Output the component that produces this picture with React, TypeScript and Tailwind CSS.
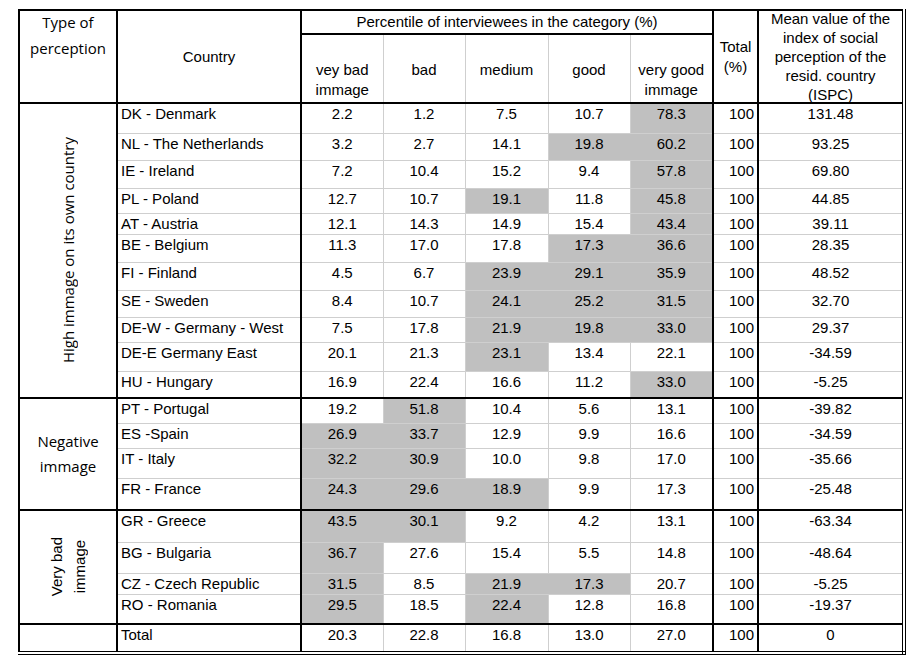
import React from "react";

type Row = { c: string; v: string[]; s: number[]; t: string; m: string; h: number };

const high: Row[] = [
  { c: "DK - Denmark", v: ["2.2", "1.2", "7.5", "10.7", "78.3"], s: [4], t: "100", m: "131.48", h: 30 },
  { c: "NL - The Netherlands", v: ["3.2", "2.7", "14.1", "19.8", "60.2"], s: [3, 4], t: "100", m: "93.25", h: 27 },
  { c: "IE - Ireland", v: ["7.2", "10.4", "15.2", "9.4", "57.8"], s: [4], t: "100", m: "69.80", h: 28 },
  { c: "PL - Poland", v: ["12.7", "10.7", "19.1", "11.8", "45.8"], s: [2, 4], t: "100", m: "44.85", h: 25 },
  { c: "AT - Austria", v: ["12.1", "14.3", "14.9", "15.4", "43.4"], s: [4], t: "100", m: "39.11", h: 21 },
  { c: "BE - Belgium", v: ["11.3", "17.0", "17.8", "17.3", "36.6"], s: [3, 4], t: "100", m: "28.35", h: 28 },
  { c: "FI - Finland", v: ["4.5", "6.7", "23.9", "29.1", "35.9"], s: [2, 3, 4], t: "100", m: "48.52", h: 28 },
  { c: "SE - Sweden", v: ["8.4", "10.7", "24.1", "25.2", "31.5"], s: [2, 3, 4], t: "100", m: "32.70", h: 27 },
  { c: "DE-W - Germany - West", v: ["7.5", "17.8", "21.9", "19.8", "33.0"], s: [2, 3, 4], t: "100", m: "29.37", h: 25 },
  { c: "DE-E Germany East", v: ["20.1", "21.3", "23.1", "13.4", "22.1"], s: [2], t: "100", m: "-34.59", h: 29 },
  { c: "HU - Hungary", v: ["16.9", "22.4", "16.6", "11.2", "33.0"], s: [4], t: "100", m: "-5.25", h: 27 },
];

const negative: Row[] = [
  { c: "PT - Portugal", v: ["19.2", "51.8", "10.4", "5.6", "13.1"], s: [1], t: "100", m: "-39.82", h: 25 },
  { c: "ES -Spain", v: ["26.9", "33.7", "12.9", "9.9", "16.6"], s: [0, 1], t: "100", m: "-34.59", h: 25 },
  { c: "IT - Italy", v: ["32.2", "30.9", "10.0", "9.8", "17.0"], s: [0, 1], t: "100", m: "-35.66", h: 30 },
  { c: "FR - France", v: ["24.3", "29.6", "18.9", "9.9", "17.3"], s: [0, 1, 2], t: "100", m: "-25.48", h: 32 },
];

const veryBad: Row[] = [
  { c: "GR - Greece", v: ["43.5", "30.1", "9.2", "4.2", "13.1"], s: [0, 1], t: "100", m: "-63.34", h: 32 },
  { c: "BG - Bulgaria", v: ["36.7", "27.6", "15.4", "5.5", "14.8"], s: [0], t: "100", m: "-48.64", h: 31 },
  { c: "CZ - Czech Republic", v: ["31.5", "8.5", "21.9", "17.3", "20.7"], s: [0, 2, 3], t: "100", m: "-5.25", h: 21 },
  { c: "RO - Romania", v: ["29.5", "18.5", "22.4", "12.8", "16.8"], s: [0, 2], t: "100", m: "-19.37", h: 30 },
];

const totalRow: Row = { c: "Total", v: ["20.3", "22.8", "16.8", "13.0", "27.0"], s: [], t: "100", m: "0", h: 29 };

const calibri = { fontFamily: "'Open Sans', 'Noto Sans', sans-serif" };

function DataCells({ r, bottom }: { r: Row; bottom: string }) {
  return (
    <>
      <td className={`border-l-2 border-r-2 border-black ${bottom} pl-[3px] align-top leading-5 whitespace-nowrap`}>{r.c}</td>
      {r.v.map((v, i) => {
        const shaded = r.s.includes(i);
        const right = i === 4 ? "border-r-2 border-r-black" : shaded && r.s.includes(i + 1) ? "border-r border-r-[#c0c0c0]" : "border-r border-r-[#cfcfcf]";
        return (
          <td
            key={i}
            className={`${right} ${bottom} ${shaded ? "bg-[#c0c0c0]" : ""} text-center align-top leading-5`}
          >
            {v}
          </td>
        );
      })}
      <td className={`border-r-2 border-r-black ${bottom} pr-[3px] text-right align-top leading-5`}>{r.t}</td>
      <td className={`border-r-4 border-r-black [border-right-style:double] ${bottom} text-center align-top leading-5`}>{r.m}</td>
    </>
  );
}

function Group({ rows, label }: { rows: Row[]; label: React.ReactNode }) {
  return (
    <>
      {rows.map((r, i) => {
        const last = i === rows.length - 1;
        const bottom = last ? "border-b-2 border-b-black" : "border-b border-b-[#cfcfcf]";
        return (
          <tr key={r.c} style={{ height: r.h }}>
            {i === 0 && (
              <td rowSpan={rows.length} className="border-l-2 border-r-2 border-b-2 border-black p-0 text-center align-middle">
                {label}
              </td>
            )}
            <DataCells r={r} bottom={bottom} />
          </tr>
        );
      })}
    </>
  );
}

export default function App() {
  return (
    <div className="w-[922px] h-[668px] bg-white overflow-hidden pt-[9px] pl-[18px]">
      <table
        className="table-fixed border-collapse w-[885px] text-[15px] text-black"
        style={{ fontFamily: "'Liberation Sans', Arial, sans-serif" }}
      >
        <colgroup>
          <col className="w-[98px]" />
          <col className="w-[184px]" />
          <col className="w-[82px]" />
          <col className="w-[82px]" />
          <col className="w-[83px]" />
          <col className="w-[82px]" />
          <col className="w-[83px]" />
          <col className="w-[45px]" />
          <col className="w-[146px]" />
        </colgroup>
        <thead>
          <tr className="h-[24px]">
            <td rowSpan={2} className="border-2 border-black text-center align-top p-0" style={calibri}>
              <div className="h-[88px] overflow-visible text-[15px] leading-[26px] -mt-[2px]">
                Type of
                <br />
                perception
              </div>
            </td>
            <td rowSpan={2} className="border-2 border-black text-center align-middle leading-5 p-0">
              Country
            </td>
            <td colSpan={5} className="border-t-2 border-b-2 border-r-2 border-black text-center align-middle leading-5 p-0">
              Percentile of interviewees in the category (%)
            </td>
            <td rowSpan={2} className="border-2 border-black text-center align-middle leading-5 p-0">
              Total
              <br />
              (%)
            </td>
            <td rowSpan={2} className="border-t-2 border-b-2 border-l-2 border-r-4 border-black [border-right-style:double] text-center align-middle p-0">
              <div className="h-[86px] flex flex-col justify-center leading-[19px]">
                <div>Mean value of the</div>
                <div>index of social</div>
                <div>perception of the</div>
                <div>resid. country</div>
                <div>(ISPC)</div>
              </div>
            </td>
          </tr>
          <tr className="h-[69px]">
            {["vey bad|immage", "bad", "medium", "good", "very good|immage"].map((h, i) => (
              <td
                key={h}
                className={`${i === 4 ? "border-r-2 border-r-black" : "border-r border-r-[#cfcfcf]"} border-b-2 border-b-black text-center align-top p-0`}
              >
                <div className="h-[64px] pt-[25px] leading-5 overflow-visible">
                  {h.split("|").map((p, j) => (
                    <div key={j}>{p}</div>
                  ))}
                </div>
              </td>
            ))}
          </tr>
        </thead>
        <tbody>
          <Group
            rows={high}
            label={
              <div className="flex justify-center items-center">
                <span className="[writing-mode:vertical-rl] rotate-180 text-[15px] leading-5 whitespace-nowrap" style={calibri}>
                  High immage on its own country
                </span>
              </div>
            }
          />
          <Group
            rows={negative}
            label={
              <div className="text-[15px] leading-[25px]" style={calibri}>
                Negative
                <br />
                immage
              </div>
            }
          />
          <Group
            rows={veryBad}
            label={
              <div className="flex justify-center items-center">
                <span className="[writing-mode:vertical-rl] rotate-180 text-center leading-[23px] whitespace-nowrap">
                  Very bad
                  <br />
                  immage
                </span>
              </div>
            }
          />
          <tr style={{ height: totalRow.h }}>
            <td className="border-l-2 border-r-2 border-black border-b-4 [border-bottom-style:double]" />
            <DataCells r={totalRow} bottom="border-b-4 border-b-black [border-bottom-style:double]" />
          </tr>
        </tbody>
      </table>
    </div>
  );
}
